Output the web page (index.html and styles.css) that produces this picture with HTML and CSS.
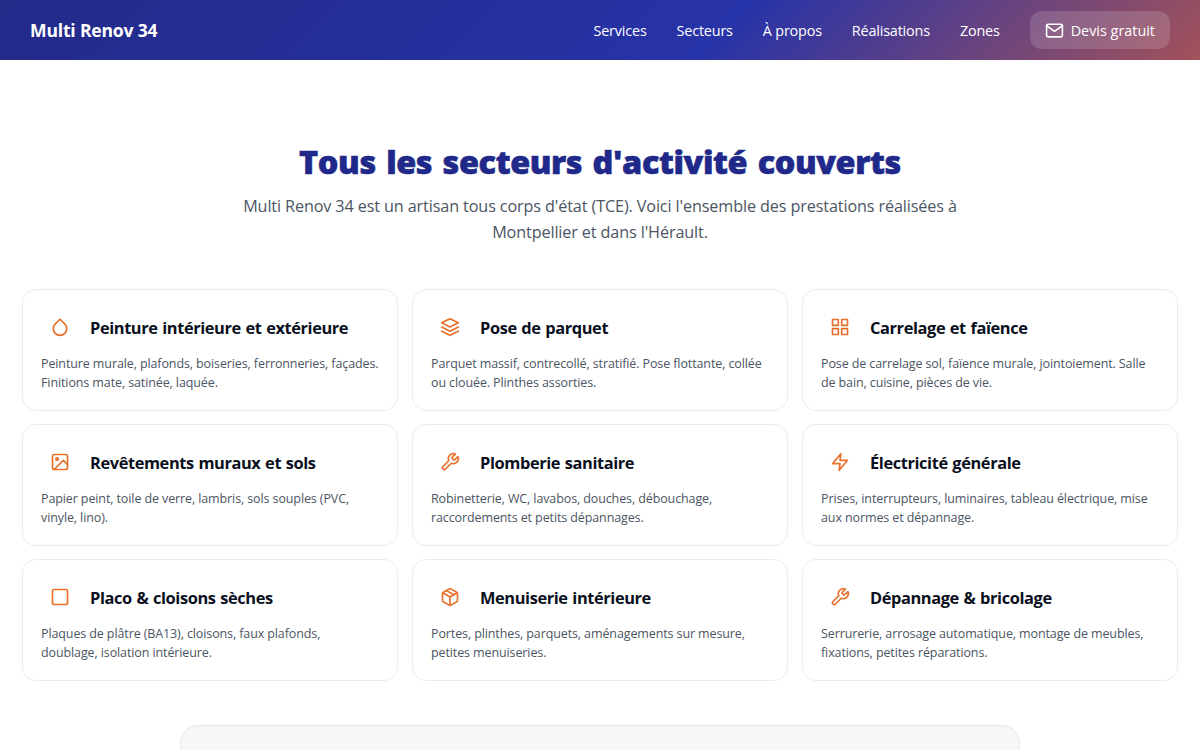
FILE: index.html
```
<!DOCTYPE html>
<html lang="fr">
<head>
<meta charset="utf-8">
<title>Multi Renov 34</title>
<link rel="stylesheet" href="styles.css">
</head>
<body>
<header class="header">
  <a href="#" class="logo">Multi Renov 34</a>
  <nav class="nav">
    <a href="#">Services</a>
    <a href="#">Secteurs</a>
    <a href="#">À propos</a>
    <a href="#">Réalisations</a>
    <a href="#">Zones</a>
    <a href="#" class="btn">
      <svg viewBox="0 0 24 24"><path d="M4 4h16c1.1 0 2 .9 2 2v12c0 1.1-.9 2-2 2H4c-1.1 0-2-.9-2-2V6c0-1.1.9-2 2-2z"/><polyline points="22 6 12 13 2 6"/></svg>
      Devis gratuit
    </a>
  </nav>
</header>

<section class="secteurs">
  <div class="intro">
    <h2>Tous les secteurs d'activité couverts</h2>
    <p>Multi Renov 34 est un artisan tous corps d'état (TCE). Voici l'ensemble des prestations réalisées à<br>Montpellier et dans l'Hérault.</p>
  </div>

  <div class="grid">
    <div class="card">
      <div class="card-head">
        <span class="icon"><svg viewBox="0 0 24 24"><path d="M12 2.69l5.66 5.66a8 8 0 1 1-11.31 0z"/></svg></span>
        <h3>Peinture intérieure et extérieure</h3>
      </div>
      <p>Peinture murale, plafonds, boiseries, ferronneries, façades.<br>Finitions mate, satinée, laquée.</p>
    </div>
    <div class="card">
      <div class="card-head">
        <span class="icon"><svg viewBox="0 0 24 24"><polygon points="12 2 2 7 12 12 22 7 12 2"/><polyline points="2 17 12 22 22 17"/><polyline points="2 12 12 17 22 12"/></svg></span>
        <h3>Pose de parquet</h3>
      </div>
      <p>Parquet massif, contrecollé, stratifié. Pose flottante, collée<br>ou clouée. Plinthes assorties.</p>
    </div>
    <div class="card">
      <div class="card-head">
        <span class="icon"><svg viewBox="0 0 24 24"><rect x="3" y="3" width="7" height="7"/><rect x="14" y="3" width="7" height="7"/><rect x="14" y="14" width="7" height="7"/><rect x="3" y="14" width="7" height="7"/></svg></span>
        <h3>Carrelage et faïence</h3>
      </div>
      <p>Pose de carrelage sol, faïence murale, jointoiement. Salle<br>de bain, cuisine, pièces de vie.</p>
    </div>
    <div class="card">
      <div class="card-head">
        <span class="icon"><svg viewBox="0 0 24 24"><rect x="3" y="3" width="18" height="18" rx="2"/><circle cx="8.5" cy="8.5" r="1.5"/><polyline points="21 15 16 10 5 21"/></svg></span>
        <h3>Revêtements muraux et sols</h3>
      </div>
      <p>Papier peint, toile de verre, lambris, sols souples (PVC,<br>vinyle, lino).</p>
    </div>
    <div class="card">
      <div class="card-head">
        <span class="icon"><svg viewBox="0 0 24 24"><path d="M14.7 6.3a1 1 0 0 0 0 1.4l1.6 1.6a1 1 0 0 0 1.4 0l3.77-3.77a6 6 0 0 1-7.94 7.94l-6.91 6.91a2.12 2.12 0 0 1-3-3l6.91-6.91a6 6 0 0 1 7.94-7.94l-3.76 3.76z"/></svg></span>
        <h3>Plomberie sanitaire</h3>
      </div>
      <p>Robinetterie, WC, lavabos, douches, débouchage,<br>raccordements et petits dépannages.</p>
    </div>
    <div class="card">
      <div class="card-head">
        <span class="icon"><svg viewBox="0 0 24 24"><polygon points="13 2 3 14 12 14 11 22 21 10 12 10 13 2"/></svg></span>
        <h3>Électricité générale</h3>
      </div>
      <p>Prises, interrupteurs, luminaires, tableau électrique, mise<br>aux normes et dépannage.</p>
    </div>
    <div class="card">
      <div class="card-head">
        <span class="icon"><svg viewBox="0 0 24 24"><rect x="3" y="3" width="18" height="18" rx="2"/></svg></span>
        <h3>Placo &amp; cloisons sèches</h3>
      </div>
      <p>Plaques de plâtre (BA13), cloisons, faux plafonds,<br>doublage, isolation intérieure.</p>
    </div>
    <div class="card">
      <div class="card-head">
        <span class="icon"><svg viewBox="0 0 24 24"><line x1="16.5" y1="9.4" x2="7.5" y2="4.21"/><path d="M21 16V8a2 2 0 0 0-1-1.73l-7-4a2 2 0 0 0-2 0l-7 4A2 2 0 0 0 3 8v8a2 2 0 0 0 1 1.73l7 4a2 2 0 0 0 2 0l7-4A2 2 0 0 0 21 16z"/><polyline points="3.27 6.96 12 12.01 20.73 6.96"/><line x1="12" y1="22.08" x2="12" y2="12"/></svg></span>
        <h3>Menuiserie intérieure</h3>
      </div>
      <p>Portes, plinthes, parquets, aménagements sur mesure,<br>petites menuiseries.</p>
    </div>
    <div class="card">
      <div class="card-head">
        <span class="icon"><svg viewBox="0 0 24 24"><path d="M14.7 6.3a1 1 0 0 0 0 1.4l1.6 1.6a1 1 0 0 0 1.4 0l3.77-3.77a6 6 0 0 1-7.94 7.94l-6.91 6.91a2.12 2.12 0 0 1-3-3l6.91-6.91a6 6 0 0 1 7.94-7.94l-3.76 3.76z"/></svg></span>
        <h3>Dépannage &amp; bricolage</h3>
      </div>
      <p>Serrurerie, arrosage automatique, montage de meubles,<br>fixations, petites réparations.</p>
    </div>
  </div>

  <div class="panel"></div>
</section>
</body>
</html>
```
FILE: styles.css
```
*{margin:0;padding:0;box-sizing:border-box;}
body{height:750px;overflow:hidden;background:#fff;color:#0b1020;font-family:"Open Sans","Noto Sans",sans-serif;}
a{color:inherit;text-decoration:none;}
svg{display:block;fill:none;stroke:currentColor;stroke-width:2;stroke-linecap:round;stroke-linejoin:round;}

/* header */
.header{display:flex;align-items:center;justify-content:space-between;height:60px;padding:0 30px;color:#fff;background:linear-gradient(135deg,#232a88 0%,#2733a8 60%,#a3525a 100%);}
.logo{font-size:17.6px;font-weight:700;letter-spacing:-.2px;}
.nav{display:flex;align-items:center;gap:30px;font-size:14.4px;letter-spacing:-.18px;white-space:nowrap;}
.btn{display:flex;align-items:center;gap:7px;height:38px;padding:0 15px;border-radius:12px;letter-spacing:0;background:rgba(255,255,255,.15);}
.btn svg{width:19px;height:19px;}

/* secteurs */
.secteurs{padding:80px 22px 0;}
.intro{text-align:center;}
.intro h2{font-size:32.4px;font-weight:800;line-height:42px;letter-spacing:-.4px;word-spacing:2.4px;color:#20298a;white-space:nowrap;-webkit-text-stroke:.6px #20298a;}
.intro p{margin-top:11px;font-size:16.2px;line-height:26px;letter-spacing:-.12px;color:#4b5563;white-space:nowrap;}
.grid{display:grid;grid-template-columns:repeat(3,minmax(0,1fr));gap:13px 14px;margin-top:44px;}
.card{height:122px;padding:18px;border:1px solid #ececef;border-radius:14px;background:#fff;}
.card-head{display:flex;align-items:center;gap:11px;height:38px;}
.icon{display:flex;align-items:center;justify-content:center;width:38px;height:38px;color:#e8702a;}
.icon svg{width:20px;height:20px;}
.card h3{font-size:16.4px;font-weight:700;letter-spacing:-.4px;word-spacing:.8px;white-space:nowrap;}
.card p{margin-top:8px;font-size:12.5px;line-height:19px;letter-spacing:-.11px;color:#4b5563;white-space:nowrap;}
.panel{width:840px;height:200px;margin:44px auto 0;border:1px solid #e5e7eb;border-radius:18px;background:#f7f7f9;}
```
